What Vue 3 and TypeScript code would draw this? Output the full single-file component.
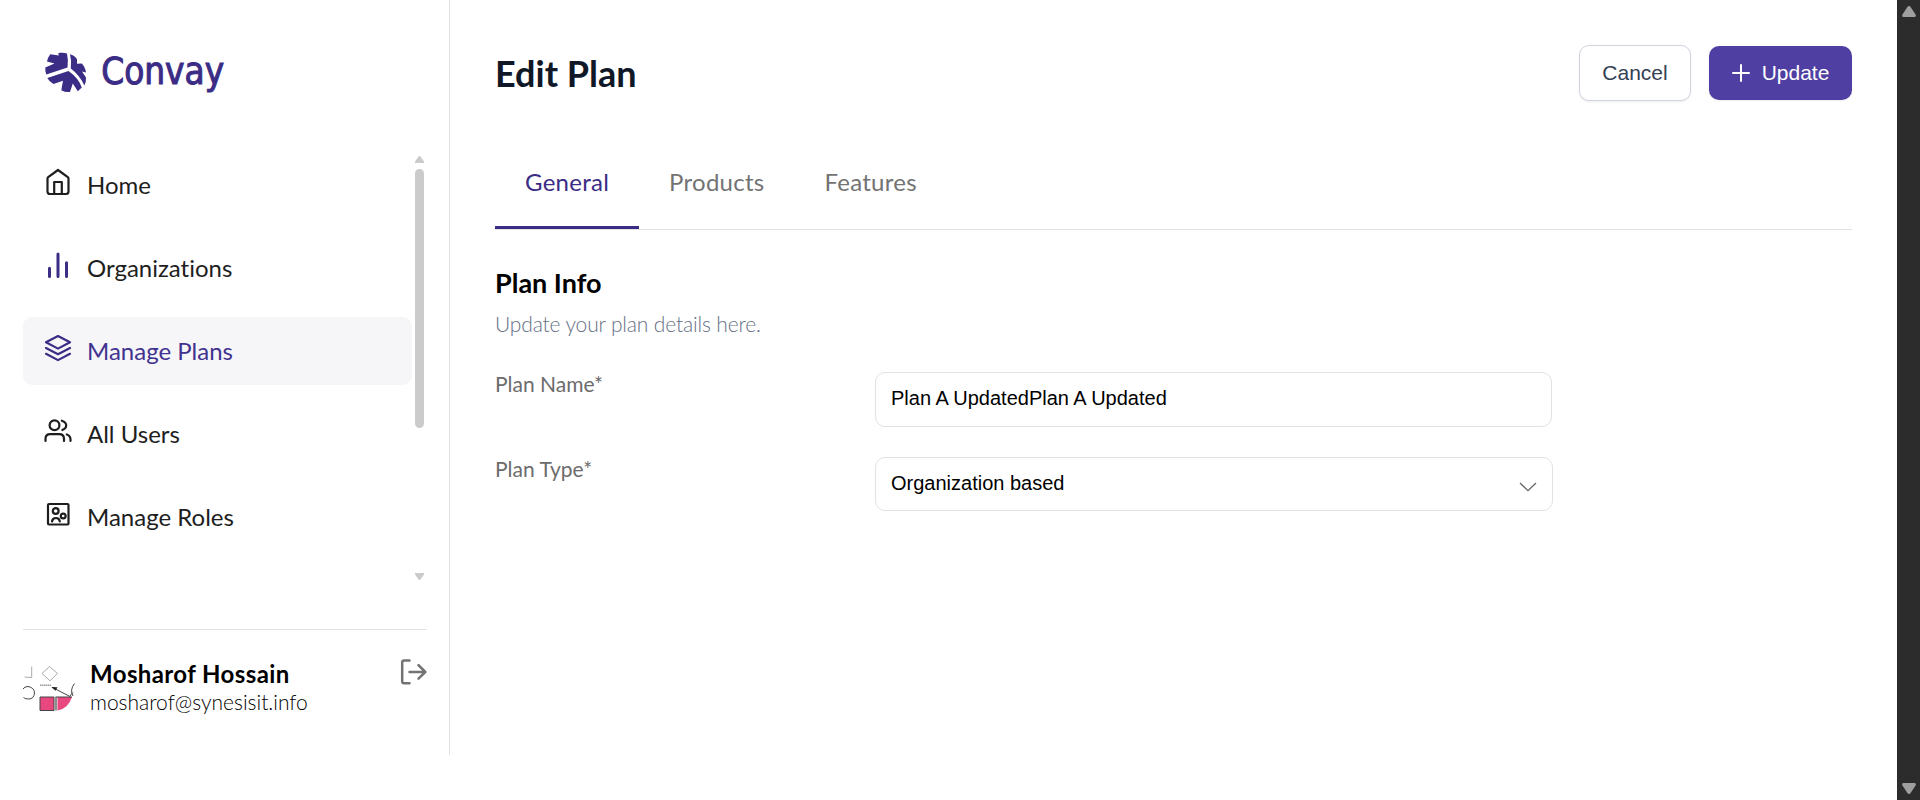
<script setup lang="ts">
import { ref } from 'vue'

interface NavItem { id: string; label: string }

const navItems: NavItem[] = [
  { id: 'home', label: 'Home' },
  { id: 'orgs', label: 'Organizations' },
  { id: 'plans', label: 'Manage Plans' },
  { id: 'users', label: 'All Users' },
  { id: 'roles', label: 'Manage Roles' },
]
const activeNav = ref('plans')

const tabs: string[] = ['General', 'Products', 'Features']
const activeTab = ref('General')

const planName = ref('Plan A UpdatedPlan A Updated')
const planType = ref('Organization based')
</script>

<template>
  <div class="page">
    <aside class="sidebar">
      <svg class="logo" width="190" height="60" viewBox="0 0 190 60" role="img" aria-label="Convay">
        <g fill="#3b2c85">
          <path d="M14.3 8.3 L23 9.5 L22.3 8 Q21.5 7 24 6.8 Q28 6.3 31 7.5 Q32.5 14 31.5 21.5 L10.300 28.500 Q9 25.500 9.300 21.500 L18.500 17.500 L11 15.500 Q11.500 12 14.300 8.300Z" />
          <path d="M34 8.3 Q38.500 9.300 41 13.200 L41 17.800 L45.800 17.500 Q49 20.500 50 26.500 L46 25.500 L50 31.500 Q50.300 35.500 48.300 39.500 Q44 29.500 34.800 22.500 Q35.800 15 34 8.300Z" />
          <path d="M11.300 32 L32.500 25 Q42.500 32 45.800 41.500 L41.800 45.200 L36.800 37.500 L34 46 Q29 46.500 25.300 44.200 L27 34.700 L17.500 38 Q13 35.500 11.300 32Z" />
        </g>
        <text x="65.200" y="37.800" textLength="123" lengthAdjust="spacingAndGlyphs">Convay</text>
      </svg>

      <div class="nav-wrap">
        <nav class="nav">
          <a
            v-for="item in navItems"
            :key="item.id"
            class="nav-item"
            :class="{ active: item.id === activeNav }"
            @click="activeNav = item.id"
          >
            <svg class="nav-icon" :class="item.id" width="30" height="30" viewBox="0 0 30 30" fill="none" stroke="currentColor" stroke-width="2.200" stroke-linecap="round" stroke-linejoin="round">
              <g v-if="item.id === 'home'">
                <path d="M4.500 10.500 Q4.500 9.700 5.200 9.200 L15 2 L24.800 9.200 Q25.500 9.700 25.500 10.500 V23.500 Q25.500 26 23 26 H7 Q4.500 26 4.500 23.500Z" />
                <path d="M11.200 26 V14 H18.800 V26" />
              </g>
              <g v-else-if="item.id === 'orgs'" stroke-width="3">
                <path d="M6.500 17.300V25.500M15 3V25.500M23.500 11.800V25.500" />
              </g>
              <g v-else-if="item.id === 'plans'">
                <path d="M15 2 L27 8.300 L15 14.600 L3 8.300Z" />
                <path d="M3 14 L15 20.200 L27 14M3 19.800 L15 26.100 L27 19.800" />
              </g>
              <g v-else-if="item.id === 'users'">
                <circle cx="11.500" cy="8.300" r="4.900" />
                <path d="M2.500 24 V22 Q2.500 17.200 7.200 17.200 H16.200 Q21 17.200 21 22 V24M18.800 3.700 Q23.200 5 23.200 8.600 Q23.200 11.800 19.300 13M23.800 17.500 Q27.500 18.600 27.500 22.500 V24" />
              </g>
              <g v-else>
                <rect x="5" y="4" width="20.500" height="20.500" rx="1" />
                <circle cx="12.700" cy="11" r="2.900" />
                <circle cx="20.200" cy="16" r="2.400" />
                <path d="M9 21.500 Q9.500 18 13 18 Q16.400 18 16.800 21.500" />
              </g>
            </svg>
            <span>{{ item.label }}</span>
          </a>
        </nav>
        <div class="nav-scroll">
          <svg width="9" height="7" viewBox="0 0 9 7"><path d="M4.500 0 Q5.200 0 5.700 .8 L9 5.500 V7 H0 V5.500 L3.300 .8 Q3.800 0 4.500 0Z" /></svg>
          <div class="nav-thumb"></div>
          <svg width="9" height="7" viewBox="0 0 9 7"><path d="M4.500 7 Q5.200 7 5.700 6.200 L9 1.500 V0 H0 V1.500 L3.300 6.200 Q3.800 7 4.500 7Z" /></svg>
        </div>
      </div>

      <div class="user">
        <svg class="avatar" width="52" height="52" viewBox="0 0 52 52" fill="none">
          <path d="M8.700 4.500 V15.500 L1.500 15" stroke="#aaa" />
          <path d="M26.500 4.500 L34.500 11.500 L27 18.800 L19 11.500Z" stroke="#aaa" />
          <path d="M0 27 Q1.500 24.500 5 24.500 Q11.300 25.500 11.500 31 Q11 37 5.500 37 Q2 37 .5 35.500" stroke="#444" />
          <path d="M17 23.300 H28" stroke="#999" stroke-width="1.500" stroke-dasharray="1.500 .5" />
          <path d="M29 25.300 L47 34.500 Q48 32 50 30.500M51.500 21.500 Q46.500 28 50 34" stroke="#444" />
          <path d="M28.500 25 L34.500 25.300 L32.500 28.800Z" fill="#222" />
          <path d="M17 35 H31 V48.500 H17Z" fill="#e8487f" stroke="#444" />
          <path d="M34.500 35 H49 Q45 47 34.500 48.500Z" fill="#e8487f" />
          <path d="M33 34.500 V48.500M33 35 H49" stroke="#444" stroke-width="1.200" />
        </svg>
        <div class="user-text">
          <strong>Mosharof Hossain</strong>
          <span>mosharof@synesisit.info</span>
        </div>
        <svg class="logout" width="28" height="28" viewBox="0 0 28 28" fill="none" stroke="#737373" stroke-width="2.500" stroke-linecap="round" stroke-linejoin="round">
          <path d="M10.500 2.400 H5 Q3.200 2.400 3.200 4.200 V23.500 Q3.200 25.300 5 25.300 H10.500M10.500 14 H26M19.500 7.200 L26.300 14 L19.500 20.600" />
        </svg>
      </div>
    </aside>

    <main class="content">
      <header class="header">
        <h1>Edit Plan</h1>
        <div class="actions">
          <button class="btn cancel">Cancel</button>
          <button class="btn update">
            <svg width="18" height="18" viewBox="0 0 18 18" fill="none" stroke="#fff" stroke-width="2" stroke-linecap="round"><path d="M9 1V17M1 9H17" /></svg>
            <span>Update</span>
          </button>
        </div>
      </header>

      <div class="tabs">
        <div v-for="tab in tabs" :key="tab" class="tab" :class="{ active: tab === activeTab }" @click="activeTab = tab">{{ tab }}</div>
      </div>

      <h2>Plan Info</h2>
      <p class="hint">Update your plan details here.</p>

      <div class="row">
        <label>Plan Name*</label>
        <input v-model="planName" class="field" type="text" />
      </div>
      <div class="row">
        <label>Plan Type*</label>
        <div class="field select">
          <span>{{ planType }}</span>
          <svg width="18" height="10" viewBox="0 0 18 10" fill="none" stroke="#666" stroke-width="1.300"><path d="M1 1 L9 8.700 L17 1" /></svg>
        </div>
      </div>
    </main>

    <div class="page-scroll">
      <svg width="14" height="11" viewBox="0 0 14 11"><path d="M7 0 Q8 0 8.600 .9 L13.700 8.800 Q14.200 11 12.500 11 H1.500 Q-.2 11 .3 8.800 L5.400 .9 Q6 0 7 0Z" /></svg>
      <svg width="14" height="11" viewBox="0 0 14 11"><path d="M7 11 Q8 11 8.600 10.100 L13.700 2.200 Q14.200 0 12.500 0 H1.500 Q-.2 0 .3 2.200 L5.400 10.100 Q6 11 7 11Z" /></svg>
    </div>
  </div>
</template>

<style>
html, body { margin: 0; overflow: hidden; background: #fff; }
</style>

<style scoped>
* { box-sizing: border-box; }
.page {
  display: flex;
  align-items: flex-start;
  width: 1920px;
  height: 800px;
  overflow: hidden;
  font-family: Lato, sans-serif;
  font-variant-ligatures: none;
  background: #fff;
}
.sidebar {
  flex: none;
  width: 450px;
  height: 755px;
  border-right: 1px solid #e2e2e2;
  padding: 46px 22px 0 23px;
}
.logo { display: block; margin-left: 13px; }
.logo text {
  font-family: "DejaVu Sans Condensed", "DejaVu Sans", sans-serif;
  font-size: 37px;
  fill: #3b2c85;
  stroke: #3b2c85;
  stroke-width: 1px;
}
.nav-wrap {
  display: flex;
  justify-content: space-between;
  height: 433px;
  margin-top: 45px;
  padding-right: 3px;
}
.nav { width: 389px; display: flex; flex-direction: column; gap: 15px; }
.nav-item {
  display: flex;
  align-items: center;
  height: 68px;
  padding: 0 20px;
  border-radius: 9px;
  font-size: 24px;
  color: #1e1e1e;
}
.nav-item.active { background: #f6f6f9; color: #42328f; }
.nav-item span { margin: 0 0 2px 14px; }
.nav-icon { flex: none; margin-bottom: 4px; }
.nav-icon.orgs, .nav-icon.plans { color: #3b2c85; }
.nav-scroll {
  display: flex;
  flex-direction: column;
  width: 9px;
  padding: 5px 0 3px;
}
.nav-scroll svg { display: block; fill: #cbcbcb; }
.nav-thumb { height: 259px; margin: 6px 0 145px; border-radius: 5px; background: #cbcbcb; }
.user {
  display: flex;
  margin-top: 45px;
  padding-top: 32px;
  border-top: 1px solid #e2e2e2;
  width: 404px;
}
.avatar { flex: none; display: block; }
.user-text { display: flex; flex-direction: column; margin: -2px 0 0 15px; color: #000; }
.user-text strong { font-size: 24px; line-height: 28px; font-weight: 700; letter-spacing: 0.4px; }
.user-text span { font-size: 21px; line-height: 28px; font-weight: 300; }
.logout { margin-left: auto; margin-top: -4px; }

.content { flex: 1; padding: 45px 45px 0; }
.header { display: flex; justify-content: space-between; align-items: center; height: 56px; }
h1 { margin: 0; font-size: 36px; line-height: 44px; font-weight: 700; color: #101828; }
.actions { display: flex; align-items: center; gap: 18px; }
.btn {
  display: flex;
  align-items: center;
  justify-content: center;
  padding: 0;
  border-radius: 10px;
  font-family: "Liberation Sans", sans-serif;
  font-size: 21px;
  box-shadow: 0 1px 2px rgba(16, 24, 40, 0.08);
}
.cancel { width: 112px; height: 56px; border: 1px solid #d0d5dd; background: #fff; color: #344054; }
.update { width: 143px; height: 54px; border: 0; background: #4f3fa2; color: #fff; gap: 12px; }
.tabs { display: flex; height: 85px; margin-top: 44px; border-bottom: 1px solid #e2e2e2; }
.tab { height: 84px; padding: 22px 30px 0; font-size: 24px; line-height: 29px; letter-spacing: 0.26px; color: #737373; }
.tab.active { color: #3b2c85; border-bottom: 3px solid #3b2c85; }
h2 { margin: 36px 0 0; font-size: 27px; line-height: 34px; font-weight: 700; color: #000; }
.hint { margin: 10px 0 0; font-size: 21px; line-height: 28px; font-weight: 300; letter-spacing: -0.15px; color: #667085; }
.row { display: flex; align-items: flex-start; height: 85px; }
.hint + .row { margin-top: 34px; }
.row label { width: 380px; margin-top: -1px; font-size: 21px; line-height: 26px; color: #6c6c6c; }
.field {
  display: flex;
  align-items: center;
  justify-content: space-between;
  width: 677px;
  height: 55px;
  padding: 0 15px 2px;
  border: 1px solid #e2e2e2;
  border-radius: 10px;
  background: #fff;
  font-family: "Liberation Sans", sans-serif;
  font-size: 20px;
  color: #000;
}
.field.select { width: 678px; height: 54px; }
.field svg { margin-top: 8px; }

.page-scroll {
  flex: none;
  width: 23px;
  height: 800px;
  background: #2c2c2c;
  display: flex;
  flex-direction: column;
  justify-content: space-between;
  align-items: center;
  padding: 6px 0;
}
.page-scroll svg { fill: #9f9f9f; }
</style>
